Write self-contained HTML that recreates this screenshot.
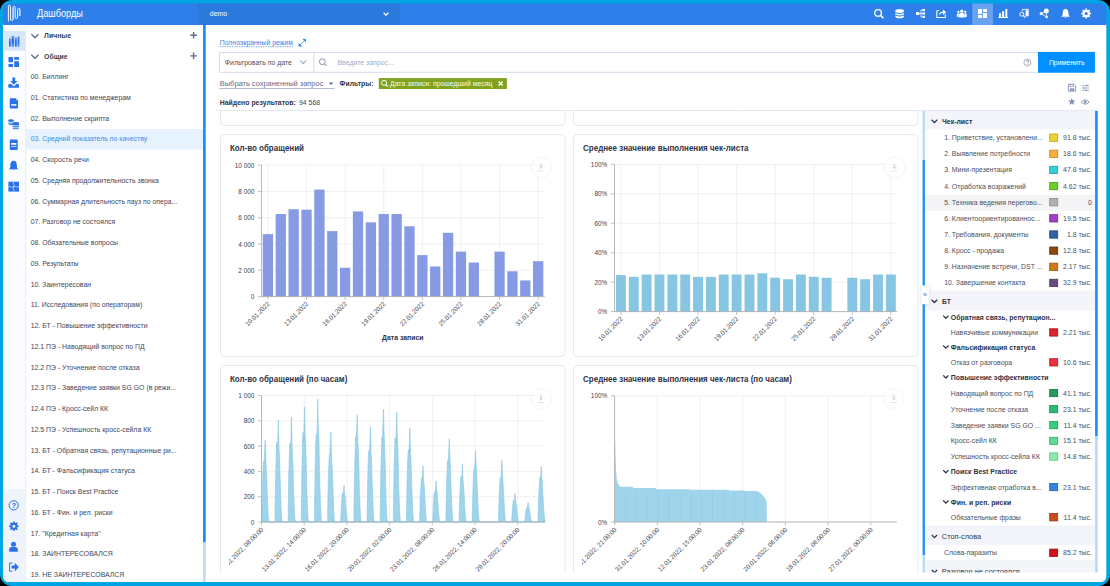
<!DOCTYPE html>
<html><head><meta charset="utf-8"><style>
html,body{margin:0;padding:0;background:#000;width:1110px;height:586px;overflow:hidden}
svg{position:absolute;left:0;top:0;font-family:"Liberation Sans", sans-serif}
</style></head><body>
<svg width="1110" height="586" viewBox="0 0 1110 586">
<rect x="0" y="0" width="1110" height="586" fill="#000"/>
<rect x="0" y="0" width="1110" height="586" rx="12" fill="#00a5e3"/>
<defs><clipPath id="app"><rect x="3.3" y="3.4" width="1103" height="578.6" rx="5.5"/></clipPath><clipPath id="main"><rect x="206" y="111" width="900" height="461.4"/></clipPath><clipPath id="c1"><rect x="229" y="134" width="336" height="222"/></clipPath><clipPath id="c2"><rect x="582" y="134" width="336" height="222"/></clipPath><clipPath id="c3"><rect x="229" y="365" width="336" height="207.4"/></clipPath><clipPath id="c4"><rect x="582" y="365" width="336" height="207.4"/></clipPath><clipPath id="leg"><rect x="920" y="110" width="180" height="462.4"/></clipPath><filter id="sh" x="-50%" y="-50%" width="200%" height="200%"><feDropShadow dx="0" dy="0.5" stdDeviation="1" flood-color="#000" flood-opacity="0.12"/></filter></defs>
<g clip-path="url(#app)">
<rect x="0" y="24" width="1110" height="586" fill="#fff" />
<rect x="0" y="0" width="1110" height="25" fill="#2f7fea" />
<rect x="198.5" y="0" width="201.5" height="25" fill="#2a79dc" />
<rect x="972.3" y="0" width="20.6" height="25" fill="#69a3f0" />
<path d="M12.2,7.6 H13.2 V19.4 H12.2Z M18.9,9.6 H20 V16 H18.9Z" fill="#fff" opacity="0.45"/>
<path d="M8.4,21.4 V6.2 A1.03,1.03 0 0 1 10.46,6.2 V19 A1.37,1.37 0 0 0 13.2,19 V7.4 A1,1 0 0 1 15.2,7.4 V17.3 A1.2,1.2 0 0 0 17.6,17.3 V9.5 A1.2,1.2 0 0 1 20,9.5 V16" fill="none" stroke="#fff" stroke-width="0.95"/>
<text transform="translate(37,17.2) scale(0.8850,1)" font-size="10.396" fill="#fff" font-weight="400" text-anchor="start" >Дашборды</text>
<text transform="translate(209.8,15.7) scale(0.9434,1)" font-size="7.314" fill="#fff" font-weight="400" text-anchor="start" >demo</text>
<path d="M383.6,12.8 L386,15.2 L388.4,12.8" fill="none" stroke="#fff" stroke-width="1.3"/>
<circle cx="878.1" cy="12.9" r="3.3" fill="none" stroke="#fff" stroke-width="1.3"/><path d="M880.5,15.3 L883,17.8" stroke="#fff" stroke-width="1.6" stroke-linecap="round"/>
<g fill="#fff"><path d="M895.3,10.9 Q895.3,9 899.6,9 Q903.9,9 903.9,10.9 V12 Q899.6,14 895.3,12Z"/><path d="M895.3,12.9 Q899.6,14.9 903.9,12.9 V14.6 Q899.6,16.6 895.3,14.6Z"/><path d="M895.3,15.5 Q899.6,17.5 903.9,15.5 V16.5 Q903.9,18.3 899.6,18.3 Q895.3,18.3 895.3,16.5Z"/></g>
<g fill="#fff"><rect x="916" y="12" width="3.2" height="3"/><rect x="922.4" y="9" width="2.6" height="2.2"/><rect x="922.4" y="12.4" width="2.6" height="2.2"/><rect x="922.4" y="15.8" width="2.6" height="2.2"/></g><path d="M919,13.5 H921 M921,10 V17 M921,10 H922.6 M921,13.5 H922.6 M921,17 H922.6" stroke="#fff" stroke-width="0.8" fill="none"/>
<path d="M938.9,10.4 H937.8 Q936.8,10.4 936.8,11.4 V17.4 H945.3 V14.2" fill="none" stroke="#fff" stroke-width="1.05"/><path d="M939,15.2 Q939.3,11.8 943,11.6 V9.4 L946.2,12.2 L943,15 V12.9 Q940.6,12.8 939,15.2Z" fill="#fff"/>
<g fill="#fff"><circle cx="961.8" cy="11.2" r="1.6"/><path d="M958.9,17.6 V14.6 Q958.9,12.9 960.6,12.9 H963 Q964.7,12.9 964.7,14.6 V17.6Z"/><circle cx="958.4" cy="11.8" r="1.15"/><path d="M956.9,16.9 V14.4 Q956.9,13.3 958.1,13.3 H958.7 V16.9Z"/><circle cx="965.2" cy="11.8" r="1.15"/><path d="M966.7,16.9 V14.4 Q966.7,13.3 965.5,13.3 H964.9 V16.9Z"/></g>
<g fill="#fff"><rect x="978" y="9" width="4" height="5"/><rect x="978" y="15" width="4" height="3"/><rect x="983" y="9" width="4" height="3"/><rect x="983" y="13" width="4" height="5"/></g>
<g fill="#fff"><rect x="999" y="13.2" width="2" height="4.2"/><rect x="1002.1" y="11.2" width="2" height="6.2"/><rect x="1005.3" y="9" width="2" height="8.4"/><rect x="998.3" y="17" width="9.7" height="1"/></g>
<path d="M1022.3,11.2 V9.4 H1028.3 V15.9 H1025.2" fill="none" stroke="#fff" stroke-width="0.9"/><rect x="1025.6" y="10.4" width="2.3" height="5.2" fill="#fff"/><circle cx="1021.8" cy="14.2" r="2" fill="none" stroke="#fff" stroke-width="1"/><path d="M1023.3,15.7 L1025.3,17.7" stroke="#fff" stroke-width="1.1"/>
<g fill="#fff"><circle cx="1046.3" cy="11.1" r="2.5"/><circle cx="1041.3" cy="13.6" r="1.65"/><circle cx="1046.7" cy="17.1" r="1.25"/></g><path d="M1041.3,13.6 L1046.3,11.1 M1041.3,13.6 L1046.7,17.1 M1046.4,12 V17" stroke="#fff" stroke-width="0.8"/>
<path d="M1065.6,8.9 Q1068.2,8.9 1068.4,12.3 L1068.7,15.2 L1070.1,16.7 H1061.1 L1062.5,15.2 L1062.8,12.3 Q1063,8.9 1065.6,8.9Z" fill="#fff"/><path d="M1064.5,17.1 Q1065.6,18.5 1066.7,17.1Z" fill="#fff"/>
<path d="M1089.40,14.30 L1091.10,14.30 L1091.10,12.70 L1089.40,12.70Z M1087.90,16.33 L1089.10,17.53 L1090.23,16.40 L1089.03,15.20Z M1085.40,16.70 L1085.40,18.40 L1087.00,18.40 L1087.00,16.70Z M1083.37,15.20 L1082.17,16.40 L1083.30,17.53 L1084.50,16.33Z M1083.00,12.70 L1081.30,12.70 L1081.30,14.30 L1083.00,14.30Z M1084.50,10.67 L1083.30,9.47 L1082.17,10.60 L1083.37,11.80Z M1087.00,10.30 L1087.00,8.60 L1085.40,8.60 L1085.40,10.30Z M1089.03,11.80 L1090.23,10.60 L1089.10,9.47 L1087.90,10.67Z" fill="#fff"/>
<circle cx="1086.2" cy="13.5" r="2.70" fill="none" stroke="#fff" stroke-width="2.20"/>
<rect x="3" y="25" width="22.5" height="561" fill="#fafcff" />
<rect x="25.3" y="25" width="0.8" height="561" fill="#dfe8f8" />
<rect x="3" y="25" width="22.3" height="6" fill="#fdfdff" />
<rect x="3" y="30.9" width="22.3" height="19.7" fill="#d8e6fa" />
<rect x="3" y="489.1" width="22.3" height="100" fill="#eef3fc" />
<g fill="#2a72ea"><rect x="9" y="38.5" width="1.8" height="8"/><rect x="11.6" y="36.2" width="2.6" height="10.3"/><rect x="15" y="37.6" width="1.8" height="8.9"/><rect x="17.6" y="36.6" width="1.8" height="9.9"/></g><path d="M9,40 H10.8 M11.6,37.8 H14.2 M11.6,45 H14.2 M15,39 H16.8 M17.6,38.2 H19.4 M17.6,44.8 H19.4" stroke="#d8e6fa" stroke-width="0.5"/>
<g fill="#2a72ea"><rect x="8.5" y="57" width="4.5" height="5.3" rx="0.6"/><rect x="8.5" y="64" width="4.5" height="3" rx="0.6"/><rect x="14.2" y="57" width="4.8" height="2.8" rx="0.6"/><rect x="14.2" y="61.3" width="4.8" height="5.7" rx="0.6"/></g>
<path d="M12.4,77.5 H15.2 V81 H17.4 L13.8,84.8 L10.2,81 H12.4Z" fill="#2a72ea"/><path d="M8.3,85 Q8.3,84 9.3,84 H11.2 L13.8,86.4 L16.4,84 H18.1 Q19,84 19,85 V86.9 Q19,87.8 18,87.8 H9.3 Q8.3,87.8 8.3,86.9Z" fill="#2a72ea"/>
<path d="M10.4,98.3 H16 L18,100.3 V107.7 Q18,108.5 17.2,108.5 H10.6 Q9.8,108.5 9.8,107.7 V99 Q9.8,98.3 10.4,98.3Z" fill="#2a72ea"/><path d="M16,98.3 V100.3 H18" fill="#b9cff8"/><rect x="11.2" y="104" width="5.2" height="1.8" fill="#dfe9fb"/>
<g fill="#2a72ea"><path d="M8.4,120.3 Q8.4,119.2 11,119.2 Q13.6,119.2 13.6,120.3 V121.6 Q11,122.5 8.4,121.6Z"/><path d="M8.4,122.3 Q11,123.2 13,122.6 V125.2 Q11,125.6 8.4,124.6Z" opacity="0.75"/><path d="M12.6,123 Q12.6,121.9 15.8,121.9 Q19,121.9 19,123 V125 Q15.8,126 12.6,125Z"/><path d="M12.6,125.8 Q15.8,126.8 19,125.8 V127 Q15.8,128 12.6,127Z"/><path d="M12.6,127.7 Q15.8,128.7 19,127.7 V128.2 Q19,129.2 15.8,129.2 Q12.6,129.2 12.6,128.2Z"/></g>
<rect x="9.8" y="139.6" width="7.9" height="10.3" rx="0.8" fill="#2a72ea"/><rect x="11.2" y="143" width="5.1" height="1.8" fill="#f8faff"/><rect x="11.2" y="146.1" width="5.1" height="0.8" fill="#f8faff"/>
<path d="M13.6,160.8 Q16.6,160.8 16.8,164.6 L17,167.8 L18.3,169.3 H8.9 L10.2,167.8 L10.4,164.6 Q10.6,160.8 13.6,160.8Z" fill="#2a72ea"/><path d="M12.5,169.6 Q13.6,171 14.7,169.6Z" fill="#2a72ea"/>
<rect x="8.4" y="181.7" width="10.6" height="9.9" fill="#2a72ea"/><path d="M8.4,186.9 Q10,186 10.8,186.9 Q11.6,187.8 13,186.8 Q14.4,185.8 15.4,186.7 Q16.6,187.6 19,186.4 M13.7,181.7 Q12.9,183 13.8,184 Q14.6,185 13.7,186.8 Q12.9,188.6 13.8,189.6 Q14.4,190.6 13.7,191.6" fill="none" stroke="#f8faff" stroke-width="0.6"/>
<circle cx="13.7" cy="505.3" r="4.6" fill="none" stroke="#2a72ea" stroke-width="1"/>
<text transform="translate(13.75,508.2) scale(0.9434,1)" font-size="8.056" fill="#2a72ea" font-weight="700" text-anchor="middle" >?</text>
<path d="M16.90,527.00 L18.70,527.00 L18.70,525.40 L16.90,525.40Z M15.46,528.89 L16.73,530.16 L17.86,529.03 L16.59,527.76Z M13.10,529.20 L13.10,531.00 L14.70,531.00 L14.70,529.20Z M11.21,527.76 L9.94,529.03 L11.07,530.16 L12.34,528.89Z M10.90,525.40 L9.10,525.40 L9.10,527.00 L10.90,527.00Z M12.34,523.51 L11.07,522.24 L9.94,523.37 L11.21,524.64Z M14.70,523.20 L14.70,521.40 L13.10,521.40 L13.10,523.20Z M16.59,524.64 L17.86,523.37 L16.73,522.24 L15.46,523.51Z" fill="#2a72ea"/>
<circle cx="13.9" cy="526.2" r="2.55" fill="none" stroke="#2a72ea" stroke-width="2.10"/>
<circle cx="13.5" cy="544.3" r="2.5" fill="#2a72ea"/><path d="M9.2,551.8 V549.6 Q9.2,546.9 11.9,546.9 H15.1 Q17.8,546.9 17.8,549.6 V551.8Z" fill="#2a72ea"/>
<path d="M12.4,563 H9.6 V571.2 H12.4" fill="none" stroke="#2a72ea" stroke-width="1"/><path d="M11.6,565.6 H14.8 V562.8 L18.8,567.1 L14.8,571.4 V568.6 H11.6Z" fill="#2a72ea"/>
<path d="M31.3,34.3 L34.9,37.8 L38.5,34.3" fill="none" stroke="#5b6a91" stroke-width="1.3"/>
<text transform="translate(44.1,38.1) scale(0.9434,1)" font-size="7.314" fill="#3a3f50" font-weight="700" text-anchor="start" >Личные</text>
<path d="M31.3,54.8 L34.9,58.3 L38.5,54.8" fill="none" stroke="#5b6a91" stroke-width="1.3"/>
<text transform="translate(44.1,58.6) scale(0.9434,1)" font-size="7.314" fill="#3a3f50" font-weight="700" text-anchor="start" >Общие</text>
<path d="M193.6,32 V38.6 M190.3,35.3 H196.9" stroke="#5b6a91" stroke-width="1.4"/>
<path d="M193.6,52.6 V59.2 M190.3,55.9 H196.9" stroke="#5b6a91" stroke-width="1.4"/>
<text transform="translate(30.7,79.1) scale(0.9434,1)" font-size="7.314" fill="#41465a" font-weight="400" text-anchor="start" >00. Биллинг</text>
<text transform="translate(30.7,99.85) scale(0.9434,1)" font-size="7.314" fill="#41465a" font-weight="400" text-anchor="start" >01. Статистика по менеджерам</text>
<text transform="translate(30.7,120.6) scale(0.9434,1)" font-size="7.314" fill="#41465a" font-weight="400" text-anchor="start" >02. Выполнение скрипта</text>
<rect x="26.1" y="129" width="176.9" height="20.6" fill="#e6f3fe" />
<text transform="translate(30.7,141.35) scale(0.9434,1)" font-size="7.314" fill="#3b8de6" font-weight="400" text-anchor="start" >03. Средний показатель по качеству</text>
<text transform="translate(30.7,162.1) scale(0.9434,1)" font-size="7.314" fill="#41465a" font-weight="400" text-anchor="start" >04. Скорость речи</text>
<text transform="translate(30.7,182.85) scale(0.9434,1)" font-size="7.314" fill="#41465a" font-weight="400" text-anchor="start" >05. Средняя продолжительность звонка</text>
<text transform="translate(30.7,203.6) scale(0.9434,1)" font-size="7.314" fill="#41465a" font-weight="400" text-anchor="start" >06. Суммарная длительность пауз по опера...</text>
<text transform="translate(30.7,224.35) scale(0.9434,1)" font-size="7.314" fill="#41465a" font-weight="400" text-anchor="start" >07. Разговор не состоялся</text>
<text transform="translate(30.7,245.1) scale(0.9434,1)" font-size="7.314" fill="#41465a" font-weight="400" text-anchor="start" >08. Обязательные вопросы</text>
<text transform="translate(30.7,265.85) scale(0.9434,1)" font-size="7.314" fill="#41465a" font-weight="400" text-anchor="start" >09. Результаты</text>
<text transform="translate(30.7,286.6) scale(0.9434,1)" font-size="7.314" fill="#41465a" font-weight="400" text-anchor="start" >10. Заинтересован</text>
<text transform="translate(30.7,307.35) scale(0.9434,1)" font-size="7.314" fill="#41465a" font-weight="400" text-anchor="start" >11. Исследования (по операторам)</text>
<text transform="translate(30.7,328.1) scale(0.9434,1)" font-size="7.314" fill="#41465a" font-weight="400" text-anchor="start" >12. БТ - Повышение эффективности</text>
<text transform="translate(30.7,348.85) scale(0.9434,1)" font-size="7.314" fill="#41465a" font-weight="400" text-anchor="start" >12.1 ПЭ - Наводящий вопрос по ПД</text>
<text transform="translate(30.7,369.6) scale(0.9434,1)" font-size="7.314" fill="#41465a" font-weight="400" text-anchor="start" >12.2 ПЭ - Уточнение после отказа</text>
<text transform="translate(30.7,390.35) scale(0.9434,1)" font-size="7.314" fill="#41465a" font-weight="400" text-anchor="start" >12.3 ПЭ - Заведение заявки SG GO (в режи...</text>
<text transform="translate(30.7,411.1) scale(0.9434,1)" font-size="7.314" fill="#41465a" font-weight="400" text-anchor="start" >12.4 ПЭ - Кросс-сейл КК</text>
<text transform="translate(30.7,431.85) scale(0.9434,1)" font-size="7.314" fill="#41465a" font-weight="400" text-anchor="start" >12.5 ПЭ - Успешность кросс-сейла КК</text>
<text transform="translate(30.7,452.6) scale(0.9434,1)" font-size="7.314" fill="#41465a" font-weight="400" text-anchor="start" >13. БТ - Обратная связь, репутационные ри...</text>
<text transform="translate(30.7,473.35) scale(0.9434,1)" font-size="7.314" fill="#41465a" font-weight="400" text-anchor="start" >14. БТ - Фальсификация статуса</text>
<text transform="translate(30.7,494.1) scale(0.9434,1)" font-size="7.314" fill="#41465a" font-weight="400" text-anchor="start" >15. БТ - Поиск Best Practice</text>
<text transform="translate(30.7,514.85) scale(0.9434,1)" font-size="7.314" fill="#41465a" font-weight="400" text-anchor="start" >16. БТ - Фин. и реп. риски</text>
<text transform="translate(30.7,535.6) scale(0.9434,1)" font-size="7.314" fill="#41465a" font-weight="400" text-anchor="start" >17. "Кредитная карта"</text>
<text transform="translate(30.7,556.35) scale(0.9434,1)" font-size="7.314" fill="#41465a" font-weight="400" text-anchor="start" >18. ЗАИНТЕРЕСОВАЛСЯ</text>
<text transform="translate(30.7,577.1) scale(0.9434,1)" font-size="7.314" fill="#41465a" font-weight="400" text-anchor="start" >19. НЕ ЗАИНТЕРЕСОВАЛСЯ</text>
<rect x="203" y="25" width="2.7" height="517.5" fill="#1a8cff" />
<rect x="203" y="542.5" width="2.7" height="45" fill="#b9dcff" />
<text transform="translate(219.8,44.8) scale(0.9434,1)" font-size="7.261" fill="#3583e6" font-weight="400" text-anchor="start" >Полноэкранный режим</text>
<path d="M219.8,46.7 H293" stroke="#3583e6" stroke-width="0.7" stroke-dasharray="1.4,1"/>
<path d="M300.2,44.8 L304.4,40.6" stroke="#1a86f5" stroke-width="0.7"/><path d="M299,46.2 V43.6 L301.6,46.2Z M305.6,39.2 V41.8 L303,39.2Z" fill="#1a86f5" stroke="#1a86f5" stroke-width="0.6" stroke-linejoin="round"/>
<rect x="219.5" y="52.5" width="875" height="19.8" fill="#fff" stroke="#d7ddec" stroke-width="1"/>
<path d="M313.8,52.5 V72.3" stroke="#d7ddec" stroke-width="1"/>
<text transform="translate(224.8,64.9) scale(0.9434,1)" font-size="7.314" fill="#4a4f5e" font-weight="400" text-anchor="start" >Фильтровать по дате</text>
<path d="M300.3,60.4 L303.2,63.6 L306.1,60.4" fill="none" stroke="#a3aec9" stroke-width="1.2"/>
<circle cx="322.3" cy="61.7" r="2.9" fill="none" stroke="#7c87a6" stroke-width="0.9"/><path d="M324.4,63.8 L326.6,66" stroke="#7c87a6" stroke-width="1"/>
<text transform="translate(337.5,64.9) scale(0.9434,1)" font-size="7.314" fill="#a4acc8" font-weight="400" text-anchor="start" >Введите запрос...</text>
<circle cx="1027.4" cy="62.5" r="3.5" fill="none" stroke="#8f97ab" stroke-width="0.75"/>
<text transform="translate(1027.45,64.95) scale(0.9434,1)" font-size="6.784" fill="#8f97ab" font-weight="700" text-anchor="middle" >?</text>
<rect x="1038" y="51.9" width="56.9" height="20.8" fill="#0090ff" />
<text transform="translate(1048.9,64.9) scale(0.9434,1)" font-size="7.314" fill="#fff" font-weight="400" text-anchor="start" >Применить</text>
<text transform="translate(219.8,85.7) scale(0.9434,1)" font-size="7.908" fill="#5f6a8a" font-weight="400" text-anchor="start" >Выбрать сохраненный запрос</text>
<path d="M328.7,82.6 L333.3,82.6 L331,85Z" fill="#5f6a8a"/>
<rect x="219.3" y="88.1" width="115" height="0.9" fill="#aab4d0" />
<text transform="translate(339.5,85.7) scale(0.9434,1)" font-size="7.314" fill="#2f3548" font-weight="700" text-anchor="start" >Фильтры:</text>
<rect x="378.8" y="78.1" width="128.1" height="10.9" fill="#7fa21f" />
<circle cx="384.1" cy="82.9" r="2.5" fill="none" stroke="#fff" stroke-width="1"/><path d="M385.9,84.7 L387.8,86.6" stroke="#fff" stroke-width="1.2"/>
<text transform="translate(390,86.2) scale(0.9434,1)" font-size="7.314" fill="#fafcf2" font-weight="400" text-anchor="start" >Дата записи: прошедший месяц</text>
<rect x="494.4" y="78.1" width="0.6" height="10.9" fill="#6c8c17" />
<path d="M498.6,81.4 L502.6,85.6 M502.6,81.4 L498.6,85.6" stroke="#fff" stroke-width="1.4"/>
<text transform="translate(219.8,104.5) scale(0.9434,1)" font-size="7.314" fill="#2f3548" font-weight="700" text-anchor="start" >Найдено результатов:</text>
<text transform="translate(299,104.5) scale(0.9434,1)" font-size="7.314" fill="#3e4352" font-weight="400" text-anchor="start" >94 568</text>
<path d="M1068.4,84.3 H1074 L1075.6,85.9 V91.2 H1068.4Z" fill="none" stroke="#8793b5" stroke-width="0.9"/><rect x="1070" y="84.3" width="3.4" height="2.4" fill="none" stroke="#8793b5" stroke-width="0.7"/><rect x="1069.9" y="88.4" width="4.3" height="2.4" fill="#8793b5"/>
<path d="M1082,85.6 H1089.2 M1082,88 H1089.2 M1082,90.4 H1089.2" stroke="#8793b5" stroke-width="0.7"/><rect x="1086.2" y="84.7" width="1.2" height="1.8" fill="#8793b5"/><rect x="1083.4" y="87.1" width="1.2" height="1.8" fill="#8793b5"/><rect x="1085.8" y="89.5" width="1.2" height="1.8" fill="#8793b5"/>
<path d="M1071.80,97.80 L1072.80,100.42 L1075.60,100.56 L1073.42,102.33 L1074.15,105.04 L1071.80,103.50 L1069.45,105.04 L1070.18,102.33 L1068.00,100.56 L1070.80,100.42Z" fill="#8793b5"/>
<path d="M1081.2,102 Q1085.2,97.6 1089.2,102 Q1085.2,106.4 1081.2,102Z" fill="none" stroke="#8793b5" stroke-width="0.9"/><circle cx="1085.2" cy="102" r="1.5" fill="#8793b5"/>
<g clip-path="url(#main)">
<rect x="220.5" y="-100" width="344.5" height="225.5" rx="4" fill="#fff" stroke="#e5e8f3" stroke-width="1"/>
<rect x="573.5" y="-100" width="344.5" height="225.5" rx="4" fill="#fff" stroke="#e5e8f3" stroke-width="1"/>
<rect x="220.5" y="134.5" width="344.5" height="222" rx="4" fill="#fff" stroke="#e5e8f3" stroke-width="1"/>
<rect x="220.5" y="365.5" width="344.5" height="260" rx="4" fill="#fff" stroke="#e5e8f3" stroke-width="1"/>
<rect x="573.5" y="134.5" width="344.5" height="222" rx="4" fill="#fff" stroke="#e5e8f3" stroke-width="1"/>
<rect x="573.5" y="365.5" width="344.5" height="260" rx="4" fill="#fff" stroke="#e5e8f3" stroke-width="1"/>
<circle cx="740.5" cy="110.8" r="0.5" fill="#c0c8e0"/>
<text transform="translate(229.9,150.6) scale(0.9434,1)" font-size="8.459" fill="#2e3345" font-weight="700" text-anchor="start" >Кол-во обращений</text>
<text transform="translate(583.1,150.8) scale(0.9434,1)" font-size="8.480" fill="#2e3345" font-weight="700" text-anchor="start" >Среднее значение выполнения чек-листа</text>
<text transform="translate(229.9,381.6) scale(0.9434,1)" font-size="8.459" fill="#2e3345" font-weight="700" text-anchor="start" >Кол-во обращений (по часам)</text>
<text transform="translate(583.1,381.6) scale(0.9434,1)" font-size="8.480" fill="#2e3345" font-weight="700" text-anchor="start" >Среднее значение выполнения чек-листа (по часам)</text>
<g clip-path="url(#c1)">
<path d="M261.5,296.60 H544.6" stroke="#ececec" stroke-width="0.8"/>
<path d="M257.9,296.60 H261.5" stroke="#a8a8a8" stroke-width="0.7"/>
<text transform="translate(254.3,299.20000000000005) scale(0.9434,1)" font-size="6.784" fill="#3c4150" font-weight="400" text-anchor="end" >0</text>
<path d="M261.5,270.30 H544.6" stroke="#ececec" stroke-width="0.8"/>
<path d="M257.9,270.30 H261.5" stroke="#a8a8a8" stroke-width="0.7"/>
<text transform="translate(254.3,272.90000000000003) scale(0.9434,1)" font-size="6.784" fill="#3c4150" font-weight="400" text-anchor="end" >2 000</text>
<path d="M261.5,244.00 H544.6" stroke="#ececec" stroke-width="0.8"/>
<path d="M257.9,244.00 H261.5" stroke="#a8a8a8" stroke-width="0.7"/>
<text transform="translate(254.3,246.6) scale(0.9434,1)" font-size="6.784" fill="#3c4150" font-weight="400" text-anchor="end" >4 000</text>
<path d="M261.5,217.70 H544.6" stroke="#ececec" stroke-width="0.8"/>
<path d="M257.9,217.70 H261.5" stroke="#a8a8a8" stroke-width="0.7"/>
<text transform="translate(254.3,220.29999999999998) scale(0.9434,1)" font-size="6.784" fill="#3c4150" font-weight="400" text-anchor="end" >6 000</text>
<path d="M261.5,191.40 H544.6" stroke="#ececec" stroke-width="0.8"/>
<path d="M257.9,191.40 H261.5" stroke="#a8a8a8" stroke-width="0.7"/>
<text transform="translate(254.3,194.0) scale(0.9434,1)" font-size="6.784" fill="#3c4150" font-weight="400" text-anchor="end" >8 000</text>
<path d="M261.5,165.10 H544.6" stroke="#ececec" stroke-width="0.8"/>
<path d="M257.9,165.10 H261.5" stroke="#a8a8a8" stroke-width="0.7"/>
<text transform="translate(254.3,167.7) scale(0.9434,1)" font-size="6.784" fill="#3c4150" font-weight="400" text-anchor="end" >10 000</text>
<path d="M267.93,165.1 V296.6" stroke="#ececec" stroke-width="0.8"/>
<path d="M306.54,165.1 V296.6" stroke="#ececec" stroke-width="0.8"/>
<path d="M345.14,165.1 V296.6" stroke="#ececec" stroke-width="0.8"/>
<path d="M383.75,165.1 V296.6" stroke="#ececec" stroke-width="0.8"/>
<path d="M422.35,165.1 V296.6" stroke="#ececec" stroke-width="0.8"/>
<path d="M460.96,165.1 V296.6" stroke="#ececec" stroke-width="0.8"/>
<path d="M499.56,165.1 V296.6" stroke="#ececec" stroke-width="0.8"/>
<path d="M538.17,165.1 V296.6" stroke="#ececec" stroke-width="0.8"/>
</g>
<rect x="262.78" y="234.12" width="10.3" height="62.48" fill="#7c93e1" fill-opacity="0.92"/>
<rect x="275.65" y="214.03" width="10.3" height="82.57" fill="#7c93e1" fill-opacity="0.92"/>
<rect x="288.52" y="209.22" width="10.3" height="87.38" fill="#7c93e1" fill-opacity="0.92"/>
<rect x="301.39" y="209.67" width="10.3" height="86.93" fill="#7c93e1" fill-opacity="0.92"/>
<rect x="314.26" y="189.56" width="10.3" height="107.04" fill="#7c93e1" fill-opacity="0.92"/>
<rect x="327.12" y="231.07" width="10.3" height="65.53" fill="#7c93e1" fill-opacity="0.92"/>
<rect x="339.99" y="267.76" width="10.3" height="28.84" fill="#7c93e1" fill-opacity="0.92"/>
<rect x="352.86" y="211.41" width="10.3" height="85.19" fill="#7c93e1" fill-opacity="0.92"/>
<rect x="365.73" y="222.33" width="10.3" height="74.27" fill="#7c93e1" fill-opacity="0.92"/>
<rect x="378.60" y="214.03" width="10.3" height="82.57" fill="#7c93e1" fill-opacity="0.92"/>
<rect x="391.47" y="214.03" width="10.3" height="82.57" fill="#7c93e1" fill-opacity="0.92"/>
<rect x="404.33" y="226.26" width="10.3" height="70.34" fill="#7c93e1" fill-opacity="0.92"/>
<rect x="417.20" y="255.10" width="10.3" height="41.50" fill="#7c93e1" fill-opacity="0.92"/>
<rect x="430.07" y="266.46" width="10.3" height="30.14" fill="#7c93e1" fill-opacity="0.92"/>
<rect x="442.94" y="232.82" width="10.3" height="63.78" fill="#7c93e1" fill-opacity="0.92"/>
<rect x="455.81" y="251.60" width="10.3" height="45.00" fill="#7c93e1" fill-opacity="0.92"/>
<rect x="468.68" y="262.53" width="10.3" height="34.07" fill="#7c93e1" fill-opacity="0.92"/>
<rect x="494.41" y="251.60" width="10.3" height="45.00" fill="#7c93e1" fill-opacity="0.92"/>
<rect x="507.28" y="271.26" width="10.3" height="25.34" fill="#7c93e1" fill-opacity="0.92"/>
<rect x="520.15" y="280.44" width="10.3" height="16.16" fill="#7c93e1" fill-opacity="0.92"/>
<rect x="533.02" y="261.21" width="10.3" height="35.39" fill="#7c93e1" fill-opacity="0.92"/>
<g clip-path="url(#c1)">
<path d="M261.5,165.1 V296.6" stroke="#a8a8a8" stroke-width="0.8"/>
<path d="M261.5,296.6 H544.6" stroke="#a8a8a8" stroke-width="0.8"/>
<path d="M267.93,296.6 V299.8" stroke="#a8a8a8" stroke-width="0.7"/>
<text transform="translate(270.23,304.40) rotate(-45) scale(0.943,1)" font-size="6.63" fill="#3c4150" text-anchor="end">10.01.2022</text>
<path d="M306.54,296.6 V299.8" stroke="#a8a8a8" stroke-width="0.7"/>
<text transform="translate(308.84,304.40) rotate(-45) scale(0.943,1)" font-size="6.63" fill="#3c4150" text-anchor="end">13.01.2022</text>
<path d="M345.14,296.6 V299.8" stroke="#a8a8a8" stroke-width="0.7"/>
<text transform="translate(347.44,304.40) rotate(-45) scale(0.943,1)" font-size="6.63" fill="#3c4150" text-anchor="end">16.01.2022</text>
<path d="M383.75,296.6 V299.8" stroke="#a8a8a8" stroke-width="0.7"/>
<text transform="translate(386.05,304.40) rotate(-45) scale(0.943,1)" font-size="6.63" fill="#3c4150" text-anchor="end">19.01.2022</text>
<path d="M422.35,296.6 V299.8" stroke="#a8a8a8" stroke-width="0.7"/>
<text transform="translate(424.65,304.40) rotate(-45) scale(0.943,1)" font-size="6.63" fill="#3c4150" text-anchor="end">22.01.2022</text>
<path d="M460.96,296.6 V299.8" stroke="#a8a8a8" stroke-width="0.7"/>
<text transform="translate(463.26,304.40) rotate(-45) scale(0.943,1)" font-size="6.63" fill="#3c4150" text-anchor="end">25.01.2022</text>
<path d="M499.56,296.6 V299.8" stroke="#a8a8a8" stroke-width="0.7"/>
<text transform="translate(501.86,304.40) rotate(-45) scale(0.943,1)" font-size="6.63" fill="#3c4150" text-anchor="end">28.01.2022</text>
<path d="M538.17,296.6 V299.8" stroke="#a8a8a8" stroke-width="0.7"/>
<text transform="translate(540.47,304.40) rotate(-45) scale(0.943,1)" font-size="6.63" fill="#3c4150" text-anchor="end">31.01.2022</text>
</g>
<text transform="translate(402.8,339.8) scale(0.9434,1)" font-size="7.314" fill="#2e3345" font-weight="700" text-anchor="middle" >Дата записи</text>
<circle cx="541.1" cy="167.3" r="10.3" fill="rgba(255,255,255,0.5)" stroke="#f1f1f1" stroke-width="0.8"/>
<path d="M540.2,163.70000000000002 H542.0 V166.70000000000002 H543.3000000000001 L541.1,169.10000000000002 L538.9,166.70000000000002 H540.2Z" fill="#dcdcdc"/><rect x="537.9" y="170.5" width="6.4" height="0.7" fill="#dcdcdc"/>
<g clip-path="url(#c2)">
<path d="M614.5,311.60 H897.3" stroke="#ececec" stroke-width="0.8"/>
<path d="M610.9,311.60 H614.5" stroke="#a8a8a8" stroke-width="0.7"/>
<text transform="translate(607.2,314.20000000000005) scale(0.9434,1)" font-size="6.784" fill="#3c4150" font-weight="400" text-anchor="end" >0%</text>
<path d="M614.5,282.16 H897.3" stroke="#ececec" stroke-width="0.8"/>
<path d="M610.9,282.16 H614.5" stroke="#a8a8a8" stroke-width="0.7"/>
<text transform="translate(607.2,284.76000000000005) scale(0.9434,1)" font-size="6.784" fill="#3c4150" font-weight="400" text-anchor="end" >20%</text>
<path d="M614.5,252.72 H897.3" stroke="#ececec" stroke-width="0.8"/>
<path d="M610.9,252.72 H614.5" stroke="#a8a8a8" stroke-width="0.7"/>
<text transform="translate(607.2,255.32000000000002) scale(0.9434,1)" font-size="6.784" fill="#3c4150" font-weight="400" text-anchor="end" >40%</text>
<path d="M614.5,223.28 H897.3" stroke="#ececec" stroke-width="0.8"/>
<path d="M610.9,223.28 H614.5" stroke="#a8a8a8" stroke-width="0.7"/>
<text transform="translate(607.2,225.88000000000002) scale(0.9434,1)" font-size="6.784" fill="#3c4150" font-weight="400" text-anchor="end" >60%</text>
<path d="M614.5,193.84 H897.3" stroke="#ececec" stroke-width="0.8"/>
<path d="M610.9,193.84 H614.5" stroke="#a8a8a8" stroke-width="0.7"/>
<text transform="translate(607.2,196.44) scale(0.9434,1)" font-size="6.784" fill="#3c4150" font-weight="400" text-anchor="end" >80%</text>
<path d="M614.5,164.40 H897.3" stroke="#ececec" stroke-width="0.8"/>
<path d="M610.9,164.40 H614.5" stroke="#a8a8a8" stroke-width="0.7"/>
<text transform="translate(607.2,167.0) scale(0.9434,1)" font-size="6.784" fill="#3c4150" font-weight="400" text-anchor="end" >100%</text>
<path d="M620.93,164.4 V311.6" stroke="#ececec" stroke-width="0.8"/>
<path d="M659.49,164.4 V311.6" stroke="#ececec" stroke-width="0.8"/>
<path d="M698.05,164.4 V311.6" stroke="#ececec" stroke-width="0.8"/>
<path d="M736.62,164.4 V311.6" stroke="#ececec" stroke-width="0.8"/>
<path d="M775.18,164.4 V311.6" stroke="#ececec" stroke-width="0.8"/>
<path d="M813.75,164.4 V311.6" stroke="#ececec" stroke-width="0.8"/>
<path d="M852.31,164.4 V311.6" stroke="#ececec" stroke-width="0.8"/>
<path d="M890.87,164.4 V311.6" stroke="#ececec" stroke-width="0.8"/>
</g>
<rect x="615.98" y="275.09" width="9.9" height="36.51" fill="#7cc1e1" fill-opacity="0.92"/>
<rect x="628.83" y="276.86" width="9.9" height="34.74" fill="#7cc1e1" fill-opacity="0.92"/>
<rect x="641.69" y="274.51" width="9.9" height="37.09" fill="#7cc1e1" fill-opacity="0.92"/>
<rect x="654.54" y="274.51" width="9.9" height="37.09" fill="#7cc1e1" fill-opacity="0.92"/>
<rect x="667.40" y="274.51" width="9.9" height="37.09" fill="#7cc1e1" fill-opacity="0.92"/>
<rect x="680.25" y="274.51" width="9.9" height="37.09" fill="#7cc1e1" fill-opacity="0.92"/>
<rect x="693.10" y="276.86" width="9.9" height="34.74" fill="#7cc1e1" fill-opacity="0.92"/>
<rect x="705.96" y="276.86" width="9.9" height="34.74" fill="#7cc1e1" fill-opacity="0.92"/>
<rect x="718.81" y="274.51" width="9.9" height="37.09" fill="#7cc1e1" fill-opacity="0.92"/>
<rect x="731.67" y="274.51" width="9.9" height="37.09" fill="#7cc1e1" fill-opacity="0.92"/>
<rect x="744.52" y="274.51" width="9.9" height="37.09" fill="#7cc1e1" fill-opacity="0.92"/>
<rect x="757.38" y="273.33" width="9.9" height="38.27" fill="#7cc1e1" fill-opacity="0.92"/>
<rect x="770.23" y="277.74" width="9.9" height="33.86" fill="#7cc1e1" fill-opacity="0.92"/>
<rect x="783.09" y="279.22" width="9.9" height="32.38" fill="#7cc1e1" fill-opacity="0.92"/>
<rect x="795.94" y="274.51" width="9.9" height="37.09" fill="#7cc1e1" fill-opacity="0.92"/>
<rect x="808.80" y="276.71" width="9.9" height="34.89" fill="#7cc1e1" fill-opacity="0.92"/>
<rect x="821.65" y="277.74" width="9.9" height="33.86" fill="#7cc1e1" fill-opacity="0.92"/>
<rect x="847.36" y="277.74" width="9.9" height="33.86" fill="#7cc1e1" fill-opacity="0.92"/>
<rect x="860.21" y="279.22" width="9.9" height="32.38" fill="#7cc1e1" fill-opacity="0.92"/>
<rect x="873.07" y="274.51" width="9.9" height="37.09" fill="#7cc1e1" fill-opacity="0.92"/>
<rect x="885.92" y="274.51" width="9.9" height="37.09" fill="#7cc1e1" fill-opacity="0.92"/>
<g clip-path="url(#c2)">
<path d="M614.5,164.4 V311.6" stroke="#a8a8a8" stroke-width="0.8"/>
<path d="M614.5,311.6 H897.3" stroke="#a8a8a8" stroke-width="0.8"/>
<path d="M620.93,311.6 V314.8" stroke="#a8a8a8" stroke-width="0.7"/>
<text transform="translate(623.23,319.40) rotate(-45) scale(0.943,1)" font-size="6.63" fill="#3c4150" text-anchor="end">10.01.2022</text>
<path d="M659.49,311.6 V314.8" stroke="#a8a8a8" stroke-width="0.7"/>
<text transform="translate(661.79,319.40) rotate(-45) scale(0.943,1)" font-size="6.63" fill="#3c4150" text-anchor="end">13.01.2022</text>
<path d="M698.05,311.6 V314.8" stroke="#a8a8a8" stroke-width="0.7"/>
<text transform="translate(700.35,319.40) rotate(-45) scale(0.943,1)" font-size="6.63" fill="#3c4150" text-anchor="end">16.01.2022</text>
<path d="M736.62,311.6 V314.8" stroke="#a8a8a8" stroke-width="0.7"/>
<text transform="translate(738.92,319.40) rotate(-45) scale(0.943,1)" font-size="6.63" fill="#3c4150" text-anchor="end">19.01.2022</text>
<path d="M775.18,311.6 V314.8" stroke="#a8a8a8" stroke-width="0.7"/>
<text transform="translate(777.48,319.40) rotate(-45) scale(0.943,1)" font-size="6.63" fill="#3c4150" text-anchor="end">22.01.2022</text>
<path d="M813.75,311.6 V314.8" stroke="#a8a8a8" stroke-width="0.7"/>
<text transform="translate(816.05,319.40) rotate(-45) scale(0.943,1)" font-size="6.63" fill="#3c4150" text-anchor="end">25.01.2022</text>
<path d="M852.31,311.6 V314.8" stroke="#a8a8a8" stroke-width="0.7"/>
<text transform="translate(854.61,319.40) rotate(-45) scale(0.943,1)" font-size="6.63" fill="#3c4150" text-anchor="end">28.01.2022</text>
<path d="M890.87,311.6 V314.8" stroke="#a8a8a8" stroke-width="0.7"/>
<text transform="translate(893.17,319.40) rotate(-45) scale(0.943,1)" font-size="6.63" fill="#3c4150" text-anchor="end">31.01.2022</text>
</g>
<circle cx="894.4" cy="167.5" r="10.3" fill="rgba(255,255,255,0.5)" stroke="#f1f1f1" stroke-width="0.8"/>
<path d="M893.5,163.9 H895.3 V166.9 H896.6 L894.4,169.3 L892.1999999999999,166.9 H893.5Z" fill="#dcdcdc"/><rect x="891.1999999999999" y="170.7" width="6.4" height="0.7" fill="#dcdcdc"/>
<g clip-path="url(#c3)">
<path d="M261.5,522.00 H544.8" stroke="#ececec" stroke-width="0.8"/>
<path d="M257.9,522.00 H261.5" stroke="#a8a8a8" stroke-width="0.7"/>
<text transform="translate(254.3,524.6) scale(0.9434,1)" font-size="6.784" fill="#3c4150" font-weight="400" text-anchor="end" >0</text>
<path d="M261.5,496.70 H544.8" stroke="#ececec" stroke-width="0.8"/>
<path d="M257.9,496.70 H261.5" stroke="#a8a8a8" stroke-width="0.7"/>
<text transform="translate(254.3,499.3) scale(0.9434,1)" font-size="6.784" fill="#3c4150" font-weight="400" text-anchor="end" >200</text>
<path d="M261.5,471.40 H544.8" stroke="#ececec" stroke-width="0.8"/>
<path d="M257.9,471.40 H261.5" stroke="#a8a8a8" stroke-width="0.7"/>
<text transform="translate(254.3,474.0) scale(0.9434,1)" font-size="6.784" fill="#3c4150" font-weight="400" text-anchor="end" >400</text>
<path d="M261.5,446.10 H544.8" stroke="#ececec" stroke-width="0.8"/>
<path d="M257.9,446.10 H261.5" stroke="#a8a8a8" stroke-width="0.7"/>
<text transform="translate(254.3,448.70000000000005) scale(0.9434,1)" font-size="6.784" fill="#3c4150" font-weight="400" text-anchor="end" >600</text>
<path d="M261.5,420.80 H544.8" stroke="#ececec" stroke-width="0.8"/>
<path d="M257.9,420.80 H261.5" stroke="#a8a8a8" stroke-width="0.7"/>
<text transform="translate(254.3,423.40000000000003) scale(0.9434,1)" font-size="6.784" fill="#3c4150" font-weight="400" text-anchor="end" >800</text>
<path d="M261.5,395.50 H544.8" stroke="#ececec" stroke-width="0.8"/>
<path d="M257.9,395.50 H261.5" stroke="#a8a8a8" stroke-width="0.7"/>
<text transform="translate(254.3,398.1) scale(0.9434,1)" font-size="6.784" fill="#3c4150" font-weight="400" text-anchor="end" >1 000</text>
<path d="M261.50,395.5 V522.0" stroke="#ececec" stroke-width="0.8"/>
<path d="M304.20,395.5 V522.0" stroke="#ececec" stroke-width="0.8"/>
<path d="M346.90,395.5 V522.0" stroke="#ececec" stroke-width="0.8"/>
<path d="M389.60,395.5 V522.0" stroke="#ececec" stroke-width="0.8"/>
<path d="M432.30,395.5 V522.0" stroke="#ececec" stroke-width="0.8"/>
<path d="M475.00,395.5 V522.0" stroke="#ececec" stroke-width="0.8"/>
<path d="M517.70,395.5 V522.0" stroke="#ececec" stroke-width="0.8"/>
<path d="M261.5,522.0 L261.90,522.0 L261.90,514.05 L262.45,487.57 L263.00,468.82 L263.54,461.27 L264.09,462.95 L264.64,450.54 L265.19,440.15 L265.74,454.99 L266.28,470.47 L266.83,480.76 L267.38,496.55 L267.93,511.19 L268.47,518.14 L269.02,522.00 L269.57,522.0 L275.05,522.0 L275.05,512.84 L275.60,478.79 L276.15,458.06 L276.69,442.01 L277.24,448.62 L277.79,441.72 L278.34,420.17 L278.89,443.74 L279.43,457.06 L279.98,473.31 L280.53,489.66 L281.08,508.11 L281.62,517.27 L282.17,522.00 L282.72,522.0 L288.20,522.0 L288.20,511.90 L288.75,475.04 L289.30,458.17 L289.84,442.96 L290.39,447.35 L290.94,439.55 L291.49,417.26 L292.04,443.47 L292.58,456.78 L293.13,470.12 L293.68,491.70 L294.23,507.13 L294.77,517.35 L295.32,522.00 L295.87,522.0 L301.35,522.0 L301.35,511.70 L301.90,470.80 L302.45,445.00 L302.99,432.31 L303.54,442.61 L304.09,426.00 L304.64,406.88 L305.19,434.70 L305.73,444.33 L306.28,465.78 L306.83,486.87 L307.38,505.46 L307.92,516.65 L308.47,522.00 L309.02,522.0 L314.50,522.0 L314.50,510.58 L315.05,472.72 L315.60,445.31 L316.14,434.69 L316.69,436.04 L317.24,426.76 L317.79,399.17 L318.34,429.39 L318.88,437.70 L319.43,464.72 L319.98,487.24 L320.53,505.58 L321.07,516.28 L321.62,522.00 L322.17,522.0 L327.65,522.0 L327.65,513.78 L328.20,482.55 L328.75,466.94 L329.29,455.00 L329.84,454.24 L330.39,443.45 L330.94,432.06 L331.49,455.81 L332.03,466.52 L332.58,475.73 L333.13,495.98 L333.68,509.17 L334.22,517.58 L334.77,522.00 L335.32,522.0 L340.80,522.0 L340.80,518.46 L341.35,507.01 L341.90,499.67 L342.44,492.81 L342.99,495.50 L343.54,489.89 L344.09,485.31 L344.64,494.51 L345.18,497.34 L345.73,504.94 L346.28,511.64 L346.83,516.83 L347.37,520.39 L347.92,522.00 L348.47,522.0 L353.95,522.0 L353.95,511.68 L354.50,474.23 L355.05,454.38 L355.59,436.61 L356.14,440.41 L356.69,432.33 L357.24,414.85 L357.79,440.58 L358.33,448.40 L358.88,466.57 L359.43,491.28 L359.98,506.53 L360.52,517.26 L361.07,522.00 L361.62,522.0 L367.10,522.0 L367.10,513.53 L367.65,481.24 L368.20,461.05 L368.74,450.84 L369.29,453.72 L369.84,444.48 L370.39,427.12 L370.94,449.42 L371.48,460.53 L372.03,478.23 L372.58,493.49 L373.13,508.51 L373.67,517.67 L374.22,522.00 L374.77,522.0 L380.25,522.0 L380.25,511.03 L380.80,473.00 L381.35,454.20 L381.89,437.28 L382.44,439.69 L382.99,422.73 L383.54,409.04 L384.09,433.98 L384.63,448.43 L385.18,463.40 L385.73,488.52 L386.28,506.34 L386.82,516.39 L387.37,522.00 L387.92,522.0 L393.40,522.0 L393.40,511.86 L393.95,475.41 L394.50,453.50 L395.04,437.97 L395.59,443.71 L396.14,434.03 L396.69,412.32 L397.24,432.31 L397.78,445.79 L398.33,469.60 L398.88,490.96 L399.43,506.04 L399.97,516.82 L400.52,522.00 L401.07,522.0 L406.55,522.0 L406.55,513.30 L407.10,481.49 L407.65,461.13 L408.19,449.92 L408.74,452.22 L409.29,445.51 L409.84,428.39 L410.39,448.01 L410.93,459.44 L411.48,477.83 L412.03,492.14 L412.58,508.92 L413.12,517.73 L413.67,522.00 L414.22,522.0 L419.70,522.0 L419.70,516.59 L420.25,497.40 L420.80,487.49 L421.34,478.35 L421.89,479.18 L422.44,475.16 L422.99,465.83 L423.54,479.80 L424.08,483.16 L424.63,493.92 L425.18,504.75 L425.73,514.42 L426.27,519.34 L426.82,522.00 L427.37,522.0 L432.85,522.0 L432.85,518.32 L433.40,503.93 L433.95,495.26 L434.49,491.77 L435.04,493.43 L435.59,487.88 L436.14,481.01 L436.69,489.30 L437.23,493.73 L437.78,502.04 L438.33,509.18 L438.88,516.45 L439.43,520.16 L439.97,522.00 L440.52,522.0 L446.00,522.0 L446.00,513.87 L446.55,485.85 L447.10,470.96 L447.64,460.63 L448.19,463.45 L448.74,451.89 L449.29,438.89 L449.84,454.91 L450.38,465.86 L450.93,482.90 L451.48,496.27 L452.03,510.05 L452.57,518.05 L453.12,522.00 L453.67,522.0 L459.15,522.0 L459.15,516.47 L459.70,497.10 L460.25,486.80 L460.79,476.32 L461.34,476.64 L461.89,476.59 L462.44,463.81 L462.99,479.32 L463.53,486.09 L464.08,493.32 L464.63,505.50 L465.18,514.24 L465.72,519.17 L466.27,522.00 L466.82,522.0 L472.30,522.0 L472.30,515.53 L472.85,493.22 L473.40,477.50 L473.94,468.67 L474.49,468.47 L475.04,462.00 L475.59,450.91 L476.14,465.29 L476.68,472.64 L477.23,487.64 L477.78,500.03 L478.33,512.37 L478.87,518.46 L479.42,522.00 L479.97,522.0 L498.60,522.0 L498.60,516.51 L499.15,496.59 L499.70,484.75 L500.24,478.02 L500.79,479.14 L501.34,471.54 L501.89,460.39 L502.44,471.56 L502.98,482.73 L503.53,490.63 L504.08,503.00 L504.63,513.49 L505.18,519.11 L505.72,522.00 L506.27,522.0 L511.75,522.0 L511.75,519.31 L512.30,510.69 L512.85,504.15 L513.39,500.26 L513.94,500.57 L514.49,499.64 L515.04,493.66 L515.59,500.10 L516.13,504.03 L516.68,507.89 L517.23,513.15 L517.78,518.02 L518.33,520.72 L518.87,522.00 L519.42,522.0 L524.90,522.0 L524.90,520.08 L525.45,514.01 L526.00,510.14 L526.54,507.83 L527.09,508.22 L527.64,504.76 L528.19,502.39 L528.74,507.13 L529.28,509.70 L529.83,511.87 L530.38,515.93 L530.93,519.15 L531.48,521.08 L532.02,522.00 L532.57,522.0 L538.05,522.0 L538.05,516.75 L538.60,498.54 L539.15,487.91 L539.69,477.79 L540.24,479.16 L540.79,474.09 L541.34,466.72 L541.89,477.35 L542.43,483.62 L542.98,496.62 L543.53,506.12 L544.08,513.79 L544.63,519.40 L545.17,522.00 L545.72,522.0 L544.8,522.0Z" fill="#9fd4ea" stroke="#86c8e6" stroke-width="0.6" stroke-linejoin="round"/>
</g>
<g clip-path="url(#c3)">
<path d="M261.5,395.5 V522.0" stroke="#a8a8a8" stroke-width="0.8"/>
<path d="M261.5,522.0 H544.8" stroke="#a8a8a8" stroke-width="0.8"/>
<path d="M261.50,522.0 V525.2" stroke="#a8a8a8" stroke-width="0.7"/>
<text transform="translate(263.80,530.30) rotate(-45) scale(0.943,1)" font-size="6.63" fill="#3c4150" text-anchor="end">10.01.2022, 08:00:00</text>
<path d="M304.20,522.0 V525.2" stroke="#a8a8a8" stroke-width="0.7"/>
<text transform="translate(306.50,530.30) rotate(-45) scale(0.943,1)" font-size="6.63" fill="#3c4150" text-anchor="end">13.01.2022, 14:00:00</text>
<path d="M346.90,522.0 V525.2" stroke="#a8a8a8" stroke-width="0.7"/>
<text transform="translate(349.20,530.30) rotate(-45) scale(0.943,1)" font-size="6.63" fill="#3c4150" text-anchor="end">16.01.2022, 20:00:00</text>
<path d="M389.60,522.0 V525.2" stroke="#a8a8a8" stroke-width="0.7"/>
<text transform="translate(391.90,530.30) rotate(-45) scale(0.943,1)" font-size="6.63" fill="#3c4150" text-anchor="end">20.01.2022, 02:00:00</text>
<path d="M432.30,522.0 V525.2" stroke="#a8a8a8" stroke-width="0.7"/>
<text transform="translate(434.60,530.30) rotate(-45) scale(0.943,1)" font-size="6.63" fill="#3c4150" text-anchor="end">23.01.2022, 08:00:00</text>
<path d="M475.00,522.0 V525.2" stroke="#a8a8a8" stroke-width="0.7"/>
<text transform="translate(477.30,530.30) rotate(-45) scale(0.943,1)" font-size="6.63" fill="#3c4150" text-anchor="end">26.01.2022, 14:00:00</text>
<path d="M517.70,522.0 V525.2" stroke="#a8a8a8" stroke-width="0.7"/>
<text transform="translate(520.00,530.30) rotate(-45) scale(0.943,1)" font-size="6.63" fill="#3c4150" text-anchor="end">29.01.2022, 20:00:00</text>
</g>
<circle cx="541" cy="399" r="10.3" fill="rgba(255,255,255,0.5)" stroke="#f1f1f1" stroke-width="0.8"/>
<path d="M540.1,395.4 H541.9 V398.4 H543.2 L541,400.8 L538.8,398.4 H540.1Z" fill="#dcdcdc"/><rect x="537.8" y="402.2" width="6.4" height="0.7" fill="#dcdcdc"/>
<g clip-path="url(#c4)">
<path d="M614.6,522.00 H896.8" stroke="#ececec" stroke-width="0.8"/>
<path d="M611.0,522.00 H614.6" stroke="#a8a8a8" stroke-width="0.7"/>
<path d="M614.6,395.80 H896.8" stroke="#ececec" stroke-width="0.8"/>
<path d="M611.0,395.80 H614.6" stroke="#a8a8a8" stroke-width="0.7"/>
<text transform="translate(607.2,398.4) scale(0.9434,1)" font-size="6.784" fill="#3c4150" font-weight="400" text-anchor="end" >100%</text>
<text transform="translate(607.2,524.6) scale(0.9434,1)" font-size="6.784" fill="#3c4150" font-weight="400" text-anchor="end" >0%</text>
<path d="M614.60,395.8 V522.0" stroke="#ececec" stroke-width="0.8"/>
<path d="M657.30,395.8 V522.0" stroke="#ececec" stroke-width="0.8"/>
<path d="M700.00,395.8 V522.0" stroke="#ececec" stroke-width="0.8"/>
<path d="M742.70,395.8 V522.0" stroke="#ececec" stroke-width="0.8"/>
<path d="M785.40,395.8 V522.0" stroke="#ececec" stroke-width="0.8"/>
<path d="M828.10,395.8 V522.0" stroke="#ececec" stroke-width="0.8"/>
<path d="M870.80,395.8 V522.0" stroke="#ececec" stroke-width="0.8"/>
<path d="M614.6,522.0 L614.60,432.40 L615.20,443.76 L615.60,458.90 L616.20,471.52 L616.80,479.09 L617.60,482.88 L618.60,484.77 L620.00,486.66 L633.00,486.66 L633.00,487.93 L656.00,487.93 L656.00,489.19 L690.00,489.19 L690.00,489.82 L729.00,489.82 L729.00,490.45 L745.00,490.45 L745.00,491.08 L757.00,491.08 L759.00,492.34 L761.00,493.61 L763.00,495.50 L765.00,498.02 L766.60,501.81 L766.90,522.00Z" fill="#9fd4ea"/>
<path d="M625.6,492.34 V522.0" stroke="#8ccbe7" stroke-width="0.6"/>
<path d="M636.6,492.34 V522.0" stroke="#8ccbe7" stroke-width="0.6"/>
<path d="M647.4,492.34 V522.0" stroke="#8ccbe7" stroke-width="0.6"/>
<path d="M658.4,492.34 V522.0" stroke="#8ccbe7" stroke-width="0.6"/>
<path d="M669.1,492.34 V522.0" stroke="#8ccbe7" stroke-width="0.6"/>
<path d="M680.1,492.34 V522.0" stroke="#8ccbe7" stroke-width="0.6"/>
<path d="M690.9,492.34 V522.0" stroke="#8ccbe7" stroke-width="0.6"/>
<path d="M701.9,492.34 V522.0" stroke="#8ccbe7" stroke-width="0.6"/>
<path d="M712.6,492.34 V522.0" stroke="#8ccbe7" stroke-width="0.6"/>
<path d="M723.7,492.34 V522.0" stroke="#8ccbe7" stroke-width="0.6"/>
<path d="M734.4,492.34 V522.0" stroke="#8ccbe7" stroke-width="0.6"/>
<path d="M745.4,492.34 V522.0" stroke="#8ccbe7" stroke-width="0.6"/>
<path d="M756.2,492.34 V522.0" stroke="#8ccbe7" stroke-width="0.6"/>
</g>
<g clip-path="url(#c4)">
<path d="M614.6,395.8 V522.0" stroke="#a8a8a8" stroke-width="0.8"/>
<path d="M614.6,522.0 H896.8" stroke="#a8a8a8" stroke-width="0.8"/>
<path d="M614.60,522.0 V525.2" stroke="#a8a8a8" stroke-width="0.7"/>
<text transform="translate(616.90,530.30) rotate(-45) scale(0.943,1)" font-size="6.63" fill="#3c4150" text-anchor="end">29.01.2022, 21:00:00</text>
<path d="M657.30,522.0 V525.2" stroke="#a8a8a8" stroke-width="0.7"/>
<text transform="translate(659.60,530.30) rotate(-45) scale(0.943,1)" font-size="6.63" fill="#3c4150" text-anchor="end">31.01.2022, 10:00:00</text>
<path d="M700.00,522.0 V525.2" stroke="#a8a8a8" stroke-width="0.7"/>
<text transform="translate(702.30,530.30) rotate(-45) scale(0.943,1)" font-size="6.63" fill="#3c4150" text-anchor="end">12.01.2022, 15:00:00</text>
<path d="M742.70,522.0 V525.2" stroke="#a8a8a8" stroke-width="0.7"/>
<text transform="translate(745.00,530.30) rotate(-45) scale(0.943,1)" font-size="6.63" fill="#3c4150" text-anchor="end">23.01.2022, 08:00:00</text>
<path d="M785.40,522.0 V525.2" stroke="#a8a8a8" stroke-width="0.7"/>
<text transform="translate(787.70,530.30) rotate(-45) scale(0.943,1)" font-size="6.63" fill="#3c4150" text-anchor="end">20.01.2022, 06:00:00</text>
<path d="M828.10,522.0 V525.2" stroke="#a8a8a8" stroke-width="0.7"/>
<text transform="translate(830.40,530.30) rotate(-45) scale(0.943,1)" font-size="6.63" fill="#3c4150" text-anchor="end">18.01.2022, 06:00:00</text>
<path d="M870.80,522.0 V525.2" stroke="#a8a8a8" stroke-width="0.7"/>
<text transform="translate(873.10,530.30) rotate(-45) scale(0.943,1)" font-size="6.63" fill="#3c4150" text-anchor="end">27.01.2022, 00:00:00</text>
</g>
<circle cx="893.8" cy="398.9" r="10.3" fill="rgba(255,255,255,0.5)" stroke="#f1f1f1" stroke-width="0.8"/>
<path d="M892.9,395.29999999999995 H894.6999999999999 V398.29999999999995 H896.0 L893.8,400.7 L891.5999999999999,398.29999999999995 H892.9Z" fill="#dcdcdc"/><rect x="890.5999999999999" y="402.09999999999997" width="6.4" height="0.7" fill="#dcdcdc"/>
</g>
<g clip-path="url(#leg)">
<rect x="922.6" y="110" width="175" height="500" fill="#fff" />
<rect x="922.6" y="110" width="175" height="1.4" fill="#e1e5ef" />
<rect x="924.9" y="111.4" width="170.1" height="18.19999999999999" fill="#f3f5fa" />
<path d="M931.6,119.80000000000001 L934.4,122.60000000000001 L937.2,119.80000000000001" fill="none" stroke="#2e3345" stroke-width="1.3"/>
<text transform="translate(942,123.80000000000001) scale(0.9434,1)" font-size="7.314" fill="#2e3345" font-weight="700" text-anchor="start" >Чек-лист</text>
<text transform="translate(944.2,140.1) scale(0.9434,1)" font-size="7.314" fill="#4a4f60" font-weight="400" text-anchor="start" >1. Приветствие, установлени...</text>
<rect x="1049.7" y="134.0" width="8" height="7.3" fill="#ecd531" stroke="#b8a020" stroke-width="0.8"/>
<text transform="translate(1091.9,140.1) scale(0.9434,1)" font-size="7.314" fill="#4a4f60" font-weight="400" text-anchor="end" >91.8 тыс.</text>
<text transform="translate(944.2,156.24) scale(0.9434,1)" font-size="7.314" fill="#4a4f60" font-weight="400" text-anchor="start" >2. Выявление потребности</text>
<rect x="1049.7" y="150.14000000000001" width="8" height="7.3" fill="#fbad3d" stroke="#c88220" stroke-width="0.8"/>
<text transform="translate(1091.9,156.24) scale(0.9434,1)" font-size="7.314" fill="#4a4f60" font-weight="400" text-anchor="end" >18.6 тыс.</text>
<text transform="translate(944.2,172.38) scale(0.9434,1)" font-size="7.314" fill="#4a4f60" font-weight="400" text-anchor="start" >3. Мини-презентация</text>
<rect x="1049.7" y="166.28" width="8" height="7.3" fill="#34cfd8" stroke="#1f9aa0" stroke-width="0.8"/>
<text transform="translate(1091.9,172.38) scale(0.9434,1)" font-size="7.314" fill="#4a4f60" font-weight="400" text-anchor="end" >47.8 тыс.</text>
<text transform="translate(944.2,188.51999999999998) scale(0.9434,1)" font-size="7.314" fill="#4a4f60" font-weight="400" text-anchor="start" >4. Отработка возражений</text>
<rect x="1049.7" y="182.42" width="8" height="7.3" fill="#6dcf2a" stroke="#4a9a18" stroke-width="0.8"/>
<text transform="translate(1091.9,188.51999999999998) scale(0.9434,1)" font-size="7.314" fill="#4a4f60" font-weight="400" text-anchor="end" >4.62 тыс.</text>
<rect x="924.9" y="194.85999999999999" width="170.1" height="16" fill="#f4f4f6" />
<text transform="translate(944.2,204.66) scale(0.9434,1)" font-size="7.314" fill="#4a4f60" font-weight="400" text-anchor="start" >5. Техника ведения перегово...</text>
<rect x="1049.7" y="198.56" width="8" height="7.3" fill="#b0b0b0" stroke="#888" stroke-width="0.8"/>
<text transform="translate(1091.9,204.66) scale(0.9434,1)" font-size="7.314" fill="#4a4f60" font-weight="400" text-anchor="end" >0</text>
<text transform="translate(944.2,220.8) scale(0.9434,1)" font-size="7.314" fill="#4a4f60" font-weight="400" text-anchor="start" >6. Клиентоориентированнос...</text>
<rect x="1049.7" y="214.70000000000002" width="8" height="7.3" fill="#a23ec8" stroke="#74289a" stroke-width="0.8"/>
<text transform="translate(1091.9,220.8) scale(0.9434,1)" font-size="7.314" fill="#4a4f60" font-weight="400" text-anchor="end" >19.5 тыс.</text>
<text transform="translate(944.2,236.94) scale(0.9434,1)" font-size="7.314" fill="#4a4f60" font-weight="400" text-anchor="start" >7. Требования, документы</text>
<rect x="1049.7" y="230.84" width="8" height="7.3" fill="#2f64a8" stroke="#1f4678" stroke-width="0.8"/>
<text transform="translate(1091.9,236.94) scale(0.9434,1)" font-size="7.314" fill="#4a4f60" font-weight="400" text-anchor="end" >1.8 тыс.</text>
<text transform="translate(944.2,253.07999999999998) scale(0.9434,1)" font-size="7.314" fill="#4a4f60" font-weight="400" text-anchor="start" >8. Кросс - продажа</text>
<rect x="1049.7" y="246.98" width="8" height="7.3" fill="#8a4a0c" stroke="#60320a" stroke-width="0.8"/>
<text transform="translate(1091.9,253.07999999999998) scale(0.9434,1)" font-size="7.314" fill="#4a4f60" font-weight="400" text-anchor="end" >12.8 тыс.</text>
<text transform="translate(944.2,269.22) scale(0.9434,1)" font-size="7.314" fill="#4a4f60" font-weight="400" text-anchor="start" >9. Назначение встречи, DST ...</text>
<rect x="1049.7" y="263.12" width="8" height="7.3" fill="#d07a1c" stroke="#9a5610" stroke-width="0.8"/>
<text transform="translate(1091.9,269.22) scale(0.9434,1)" font-size="7.314" fill="#4a4f60" font-weight="400" text-anchor="end" >2.17 тыс.</text>
<text transform="translate(944.2,285.36) scale(0.9434,1)" font-size="7.314" fill="#4a4f60" font-weight="400" text-anchor="start" >10. Завершение контакта</text>
<rect x="1049.7" y="279.26" width="8" height="7.3" fill="#6c4a80" stroke="#4c325a" stroke-width="0.8"/>
<text transform="translate(1091.9,285.36) scale(0.9434,1)" font-size="7.314" fill="#4a4f60" font-weight="400" text-anchor="end" >32.9 тыс.</text>
<rect x="924.9" y="290.8" width="170.1" height="0.8" fill="#e3e6ef" />
<rect x="924.9" y="291.6" width="170.1" height="19.099999999999966" fill="#f3f5fa" />
<path d="M931.6,299.7 L934.4,302.5 L937.2,299.7" fill="none" stroke="#2e3345" stroke-width="1.3"/>
<text transform="translate(942,303.7) scale(0.9434,1)" font-size="7.314" fill="#2e3345" font-weight="700" text-anchor="start" >БТ</text>
<path d="M943.2,315.59999999999997 L945.86,318.26 L948.5200000000001,315.59999999999997" fill="none" stroke="#2e3345" stroke-width="1.2349999999999999"/>
<text transform="translate(950.8,319.9) scale(0.9434,1)" font-size="7.314" fill="#2e3345" font-weight="700" text-anchor="start" >Обратная связь, репутацион...</text>
<text transform="translate(950.8,334.9) scale(0.9434,1)" font-size="7.314" fill="#4a4f60" font-weight="400" text-anchor="start" >Навязчивые коммуникации</text>
<rect x="1049.7" y="328.79999999999995" width="8" height="7.3" fill="#e0202a" stroke="#a01018" stroke-width="0.8"/>
<text transform="translate(1091.9,334.9) scale(0.9434,1)" font-size="7.314" fill="#4a4f60" font-weight="400" text-anchor="end" >2.21 тыс.</text>
<path d="M943.2,345.5 L945.86,348.16 L948.5200000000001,345.5" fill="none" stroke="#2e3345" stroke-width="1.2349999999999999"/>
<text transform="translate(950.8,349.8) scale(0.9434,1)" font-size="7.314" fill="#2e3345" font-weight="700" text-anchor="start" >Фальсификация статуса</text>
<text transform="translate(950.8,364.8) scale(0.9434,1)" font-size="7.314" fill="#4a4f60" font-weight="400" text-anchor="start" >Отказ от разговора</text>
<rect x="1049.7" y="358.7" width="8" height="7.3" fill="#ec3040" stroke="#b01820" stroke-width="0.8"/>
<text transform="translate(1091.9,364.8) scale(0.9434,1)" font-size="7.314" fill="#4a4f60" font-weight="400" text-anchor="end" >10.6 тыс.</text>
<path d="M943.2,375.4 L945.86,378.06 L948.5200000000001,375.4" fill="none" stroke="#2e3345" stroke-width="1.2349999999999999"/>
<text transform="translate(950.8,379.7) scale(0.9434,1)" font-size="7.314" fill="#2e3345" font-weight="700" text-anchor="start" >Повышение эффективности</text>
<text transform="translate(950.8,395.5) scale(0.9434,1)" font-size="7.314" fill="#4a4f60" font-weight="400" text-anchor="start" >Наводящий вопрос по ПД</text>
<rect x="1049.7" y="389.4" width="8" height="7.3" fill="#279a5e" stroke="#1a7040" stroke-width="0.8"/>
<text transform="translate(1091.9,395.5) scale(0.9434,1)" font-size="7.314" fill="#4a4f60" font-weight="400" text-anchor="end" >41.1 тыс.</text>
<text transform="translate(950.8,411.6) scale(0.9434,1)" font-size="7.314" fill="#4a4f60" font-weight="400" text-anchor="start" >Уточнение после отказа</text>
<rect x="1049.7" y="405.5" width="8" height="7.3" fill="#2cbb72" stroke="#1c8a50" stroke-width="0.8"/>
<text transform="translate(1091.9,411.6) scale(0.9434,1)" font-size="7.314" fill="#4a4f60" font-weight="400" text-anchor="end" >23.1 тыс.</text>
<text transform="translate(950.8,427.6) scale(0.9434,1)" font-size="7.314" fill="#4a4f60" font-weight="400" text-anchor="start" >Заведение заявки SG GO ...</text>
<rect x="1049.7" y="421.5" width="8" height="7.3" fill="#36cc78" stroke="#22a058" stroke-width="0.8"/>
<text transform="translate(1091.9,427.6) scale(0.9434,1)" font-size="7.314" fill="#4a4f60" font-weight="400" text-anchor="end" >11.4 тыс.</text>
<text transform="translate(950.8,443.4) scale(0.9434,1)" font-size="7.314" fill="#4a4f60" font-weight="400" text-anchor="start" >Кросс-сейл КК</text>
<rect x="1049.7" y="437.29999999999995" width="8" height="7.3" fill="#5edc8a" stroke="#3aac66" stroke-width="0.8"/>
<text transform="translate(1091.9,443.4) scale(0.9434,1)" font-size="7.314" fill="#4a4f60" font-weight="400" text-anchor="end" >15.1 тыс.</text>
<text transform="translate(950.8,459.0) scale(0.9434,1)" font-size="7.314" fill="#4a4f60" font-weight="400" text-anchor="start" >Успешность кросс-сейла КК</text>
<rect x="1049.7" y="452.9" width="8" height="7.3" fill="#8ceaa8" stroke="#5cc080" stroke-width="0.8"/>
<text transform="translate(1091.9,459.0) scale(0.9434,1)" font-size="7.314" fill="#4a4f60" font-weight="400" text-anchor="end" >14.8 тыс.</text>
<path d="M943.2,470.09999999999997 L945.86,472.76 L948.5200000000001,470.09999999999997" fill="none" stroke="#2e3345" stroke-width="1.2349999999999999"/>
<text transform="translate(950.8,474.4) scale(0.9434,1)" font-size="7.314" fill="#2e3345" font-weight="700" text-anchor="start" >Поиск Best Practice</text>
<text transform="translate(950.8,489.5) scale(0.9434,1)" font-size="7.314" fill="#4a4f60" font-weight="400" text-anchor="start" >Эффективная отработка в...</text>
<rect x="1049.7" y="483.4" width="8" height="7.3" fill="#3583e6" stroke="#1f5fb0" stroke-width="0.8"/>
<text transform="translate(1091.9,489.5) scale(0.9434,1)" font-size="7.314" fill="#4a4f60" font-weight="400" text-anchor="end" >23.1 тыс.</text>
<path d="M943.2,500.5 L945.86,503.16 L948.5200000000001,500.5" fill="none" stroke="#2e3345" stroke-width="1.2349999999999999"/>
<text transform="translate(950.8,504.8) scale(0.9434,1)" font-size="7.314" fill="#2e3345" font-weight="700" text-anchor="start" >Фин. и реп. риски</text>
<text transform="translate(950.8,519.7) scale(0.9434,1)" font-size="7.314" fill="#4a4f60" font-weight="400" text-anchor="start" >Обязательные фразы</text>
<rect x="1049.7" y="513.6" width="8" height="7.3" fill="#c8501c" stroke="#983810" stroke-width="0.8"/>
<text transform="translate(1091.9,519.7) scale(0.9434,1)" font-size="7.314" fill="#4a4f60" font-weight="400" text-anchor="end" >11.4 тыс.</text>
<rect x="924.9" y="525.9" width="170.1" height="0.8" fill="#e3e6ef" />
<rect x="924.9" y="526.6" width="170.1" height="18.5" fill="#f3f5fa" />
<path d="M931.8,535.0 L934.4599999999999,537.66 L937.12,535.0" fill="none" stroke="#2e3345" stroke-width="1.2349999999999999"/>
<text transform="translate(941.8,538.6) scale(0.9434,1)" font-size="7.844" fill="#333848" font-weight="400" text-anchor="start" >Стоп-слова</text>
<text transform="translate(944,555.2) scale(0.9434,1)" font-size="7.314" fill="#4a4f60" font-weight="400" text-anchor="start" >Слова-паразиты</text>
<rect x="1049.7" y="549.1" width="8" height="7.3" fill="#d2101a" stroke="#a00810" stroke-width="0.8"/>
<text transform="translate(1091.9,555.2) scale(0.9434,1)" font-size="7.314" fill="#4a4f60" font-weight="400" text-anchor="end" >85.2 тыс.</text>
<rect x="924.9" y="560.5" width="170.1" height="0.8" fill="#e3e6ef" />
<rect x="924.9" y="561.3" width="170.1" height="28.700000000000045" fill="#f3f5fa" />
<path d="M931.8,570.0 L934.4599999999999,572.66 L937.12,570.0" fill="none" stroke="#2e3345" stroke-width="1.2349999999999999"/>
<text transform="translate(941.8,573.6) scale(0.9434,1)" font-size="7.844" fill="#333848" font-weight="400" text-anchor="start" >Разговор не состоялся</text>
<rect x="922.6" y="110" width="2.3" height="49.8" fill="#b4d8ff" />
<rect x="922.6" y="159.8" width="2.3" height="395.4" fill="#1a8cff" />
<rect x="922.6" y="555.2" width="2.3" height="20" fill="#b4d8ff" />
<rect x="1095.1" y="110" width="2.6" height="326" fill="#1a8cff" />
<rect x="1095.1" y="436" width="2.6" height="140" fill="#b4d8ff" />
</g>
<rect x="920.8" y="285.6" width="8.4" height="18.4" rx="1.2" fill="#fff" stroke="#e6e9f0" stroke-width="0.5" filter="url(#sh)"/>
<text transform="translate(925.0,297.4) scale(0.9434,1)" font-size="7.632" fill="#5f6880" font-weight="400" text-anchor="middle" >»</text>
<rect x="216" y="110" width="882" height="1" fill="#e3e7f0" />
</g>
</svg></body></html>
